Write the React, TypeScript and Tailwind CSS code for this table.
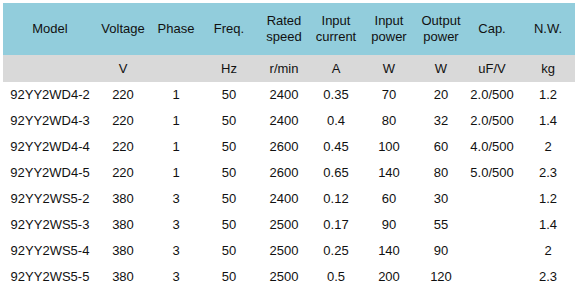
const cols = "grid grid-cols-[94px_52px_54px_52px_58px_46px_60px_44px_58px_54px]";

const rows = [
  ["92YY2WD4-2", "220", "1", "50", "2400", "0.35", "70", "20", "2.0/500", "1.2"],
  ["92YY2WD4-3", "220", "1", "50", "2400", "0.4", "80", "32", "2.0/500", "1.4"],
  ["92YY2WD4-4", "220", "1", "50", "2600", "0.45", "100", "60", "4.0/500", "2"],
  ["92YY2WD4-5", "220", "1", "50", "2600", "0.65", "140", "80", "5.0/500", "2.3"],
  ["92YY2WS5-2", "380", "3", "50", "2400", "0.12", "60", "30", "", "1.2"],
  ["92YY2WS5-3", "380", "3", "50", "2500", "0.17", "90", "55", "", "1.4"],
  ["92YY2WS5-4", "380", "3", "50", "2500", "0.25", "140", "90", "", "2"],
  ["92YY2WS5-5", "380", "3", "50", "2500", "0.5", "200", "120", "", "2.3"],
];

const heads = [
  ["Model"],
  ["Voltage"],
  ["Phase"],
  ["Freq."],
  ["Rated", "speed"],
  ["Input", "current"],
  ["Input", "power"],
  ["Output", "power"],
  ["Cap."],
  ["N.W."],
];

const units = ["", "V", "", "Hz", "r/min", "A", "W", "W", "uF/V", "kg"];

export default function App() {
  return (
    <div className="w-[579px] h-[291px] bg-white pt-[3px] pl-[3px] text-[13px] text-[#111] font-['Liberation_Sans',Arial,sans-serif]">
      <div className="w-[572px]">
        <div className={`${cols} h-[52px] bg-[#92cddc] items-center`}>
          {heads.map((h, i) => (
            <div key={i} className="text-center leading-[16px]">
              {h.map((l) => (
                <div key={l}>{l}</div>
              ))}
            </div>
          ))}
        </div>
        <div className={`${cols} h-[27px] bg-[#d9d9d9] items-center`}>
          {units.map((u, i) => (
            <div key={i} className="text-center">
              {u}
            </div>
          ))}
        </div>
        {rows.map((r) => (
          <div key={r[0]} className={`${cols} h-[26px] items-center`}>
            {r.map((c, i) => (
              <div key={i} className="text-center">
                {c}
              </div>
            ))}
          </div>
        ))}
      </div>
    </div>
  );
}
